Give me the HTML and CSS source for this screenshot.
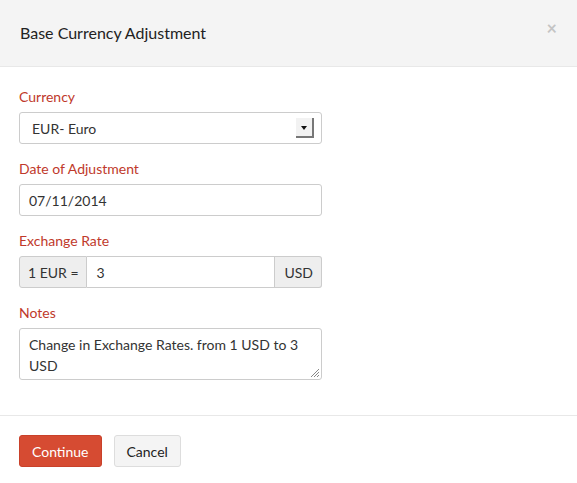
FILE: index.html
```html
<!DOCTYPE html>
<html lang="en">
<head>
    <meta charset="UTF-8">
    <meta name="viewport" content="width=device-width, initial-scale=1.0">
    <title>Base Currency Adjustment</title>
    <link rel="stylesheet" href="styles.css">
</head>
<body>
    <div class="modal">
        <div class="modal-header">
            <h4 class="modal-title">Base Currency Adjustment</h4>
            <span class="close">&times;</span>
        </div>

        <div class="modal-body">
            <div class="form-group">
                <label class="label">Currency</label>
                <div class="select">
                    <span>EUR- Euro</span>
                    <span class="select-arrow"></span>
                </div>
            </div>

            <div class="form-group">
                <label class="label">Date of Adjustment</label>
                <div class="input">07/11/2014</div>
            </div>

            <div class="form-group">
                <label class="label">Exchange Rate</label>
                <div class="input-group">
                    <span class="addon">1 EUR =</span>
                    <div class="input input-inner">3</div>
                    <span class="addon addon-right">USD</span>
                </div>
            </div>

            <div class="form-group">
                <label class="label">Notes</label>
                <div class="textarea">
                    Change in Exchange Rates. from 1 USD to 3 USD
                    <svg class="grip" width="9" height="9" viewBox="0 0 9 9">
                        <path d="M9 1 L1 9 M9 4 L4 9 M9 7 L7 9" stroke="#888" stroke-width="1"/>
                    </svg>
                </div>
            </div>
        </div>

        <div class="modal-footer">
            <button class="btn btn-primary">Continue</button>
            <button class="btn btn-default">Cancel</button>
        </div>
    </div>
</body>
</html>
```

FILE: styles.css
```css
* {
    margin: 0;
    padding: 0;
    box-sizing: border-box;
}

body {
    background: #fff;
    font-family: 'Lato', 'Open Sans', sans-serif;
    color: #333;
    font-size: 14px;
}

.modal {
    width: 577px;
    height: 483px;
    background: #fff;
}

.modal-header {
    height: 67px;
    background: #f4f4f4;
    border-bottom: 1px solid #e8e8e8;
    padding: 0 20px;
    display: flex;
    align-items: center;
    justify-content: space-between;
}

.modal-title {
    font-size: 16px;
    font-weight: normal;
    color: #222;
    padding-bottom: 1px;
}

.close {
    font-size: 18px;
    font-weight: bold;
    color: #c4c4c4;
    margin-top: -10px;
}

.modal-body {
    padding: 21px 19px 15px;
    border-bottom: 1px solid #e8e8e8;
}

.form-group {
    margin-bottom: 16px;
}

.form-group:last-child {
    margin-bottom: 20px;
}

.label {
    display: block;
    color: #c0392b;
    font-size: 14px;
    line-height: 17px;
    margin-bottom: 7px;
}

.select,
.input,
.textarea {
    width: 303px;
    border: 1px solid #ccc;
    border-radius: 3px;
    background: #fff;
    font-size: 14px;
    color: #333;
}

.select {
    height: 32px;
    padding: 0 7px 0 12px;
    display: flex;
    align-items: center;
    justify-content: space-between;
}

.select-arrow {
    width: 18px;
    height: 20px;
    background: #f2f2f2;
    border-right: 2px solid #777;
    border-bottom: 2px solid #777;
    position: relative;
}

.select-arrow::after {
    content: "";
    position: absolute;
    left: 5px;
    top: 8px;
    border-left: 3px solid transparent;
    border-right: 3px solid transparent;
    border-top: 4px solid #111;
}

.input {
    height: 32px;
    padding: 0 9px;
    display: flex;
    align-items: center;
}

.input-group {
    display: flex;
    width: 303px;
    height: 32px;
}

.addon {
    background: #eee;
    border: 1px solid #ccc;
    border-radius: 3px 0 0 3px;
    padding: 0 7px 0 8px;
    display: flex;
    align-items: center;
    font-size: 14px;
    color: #333;
}

.addon-right {
    border-radius: 0 3px 3px 0;
    border-left: none;
    padding: 0 8px 0 9px;
}

.input-inner {
    flex: 1;
    width: auto;
    border-radius: 0;
    border-left: none;
    padding: 0 10px;
}

.textarea {
    height: 52px;
    padding: 5px 9px;
    line-height: 21px;
    position: relative;
}

.grip {
    position: absolute;
    right: 2px;
    bottom: 2px;
}

.modal-footer {
    padding: 19px 19px;
    display: flex;
    gap: 12px;
}

.btn {
    height: 32px;
    border-radius: 3px;
    font-family: 'Lato', 'Open Sans', sans-serif;
    font-size: 14px;
    padding: 0 12px;
    cursor: pointer;
}

.btn-primary {
    background: #d64b32;
    border: 1px solid #c9412a;
    color: #fff;
}

.btn-default {
    background: #f4f4f4;
    border: 1px solid #ddd;
    color: #222;
}
```
